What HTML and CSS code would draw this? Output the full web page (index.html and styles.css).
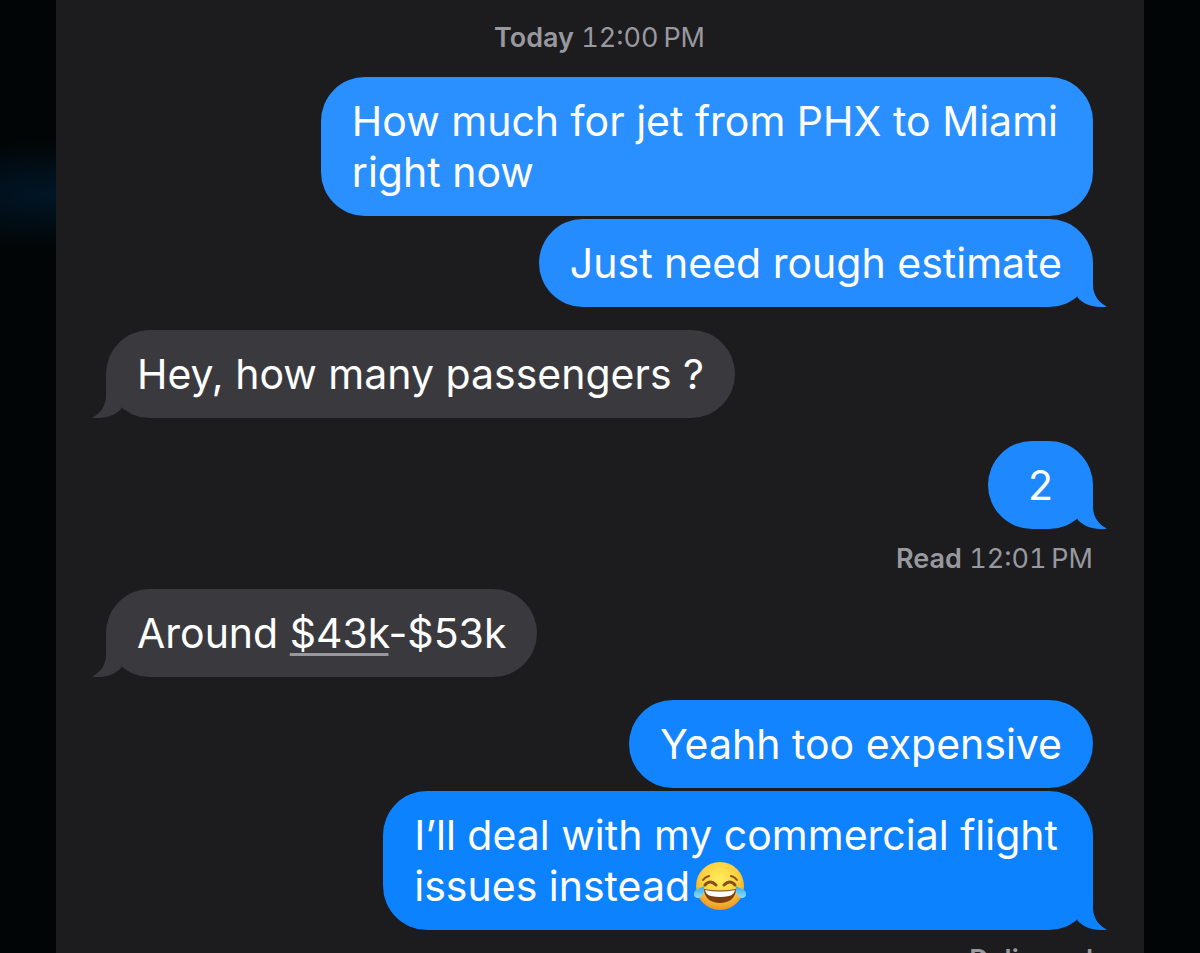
FILE: index.html
```html
<!DOCTYPE html>
<html lang="en">
<head>
<meta charset="utf-8">
<meta name="viewport" content="width=device-width, initial-scale=1">
<title>Messages</title>
<link rel="stylesheet" href="styles.css">
</head>
<body>
<svg class="defs" aria-hidden="true">
  <symbol id="tail" viewBox="0 0 32 44">
    <path d="M2 0H18V22C18 32 24 40 32 43.400C31 44 28 44 25 44C16 44 8 40.500 2.500 34.500Z"/>
  </symbol>
</svg>
<main class="chat">
  <p class="stamp"><b>Today</b> 12:00&#8239;PM</p>

  <div class="group sent">
    <p class="bubble wrapped tone-1">How much for jet from PHX to Miami<br>right now</p>
    <p class="bubble tone-2">Just need rough estimate<svg class="tail" aria-hidden="true"><use href="#tail"/></svg></p>
  </div>

  <div class="group received">
    <p class="bubble">Hey, how many passengers ?<svg class="tail" aria-hidden="true"><use href="#tail"/></svg></p>
  </div>

  <div class="group sent">
    <p class="bubble short tone-3">2<svg class="tail" aria-hidden="true"><use href="#tail"/></svg></p>
    <p class="receipt"><b>Read</b> 12:01&#8239;PM</p>
  </div>

  <div class="group received">
    <p class="bubble">Around <a class="amount" href="#amount">$43k</a>-$53k<svg class="tail" aria-hidden="true"><use href="#tail"/></svg></p>
  </div>

  <div class="group sent">
    <p class="bubble tone-4">Yeahh too expensive</p>
    <p class="bubble wrapped tone-5">I’ll deal with my commercial flight<br>issues instead<svg class="emoji" viewBox="0 0 54 50" role="img" aria-label="Face with tears of joy">
      <defs>
        <radialGradient id="skin" cx=".5" cy=".35" r=".65">
          <stop offset="0" stop-color="#ffec5e"/><stop offset=".6" stop-color="#fdcf3c"/><stop offset="1" stop-color="#ee9320"/>
        </radialGradient>
        <linearGradient id="tear" x1="0" y1="0" x2="0" y2="1">
          <stop offset="0" stop-color="#35a9ee"/><stop offset="1" stop-color="#8be0ff"/>
        </linearGradient>
      </defs>
      <circle cx="27" cy="25" r="24" fill="url(#skin)"/>
      <g fill="none" stroke="#84501a" stroke-linecap="round">
        <path stroke-width="2" d="M10 19Q12 16 16 15M38 15Q42 16 44 19"/>
        <path stroke-width="3" d="M12 24Q17 18 23 24M31 24Q37 18 42 24"/>
      </g>
      <path fill="#7b3f12" d="M11 28Q27 31 43 28C43 37 36 42 27 42S11 37 11 28Z"/>
      <path fill="#fff" d="M12 29Q27 32 42 29Q41 34 36 35Q27 37 18 35Q13 34 12 29Z"/>
      <path fill="url(#tear)" d="M11 25C12 31 9 37 5 37C0 37 0 31 3 29C6 27 8 27 11 25ZM43 25C42 31 45 37 49 37C54 37 54 31 51 29C48 27 46 27 43 25Z"/>
    </svg><svg class="tail" aria-hidden="true"><use href="#tail"/></svg></p>
    <p class="receipt"><b>Delivered</b></p>
  </div>
</main>
</body>
</html>
```
FILE: styles.css
```css
* { box-sizing: border-box; }

body {
  margin: 0;
  height: 100vh;
  overflow: hidden;
  display: flex;
  justify-content: center;
  padding: 0 56px;
  background:
    radial-gradient(ellipse 180px 54px at 54px 194px, #001627, transparent),
    #020506;
  font-family: Inter, "Liberation Sans", sans-serif;
}

p { margin: 0; }

.defs { position: absolute; width: 0; height: 0; }

.chat {
  flex: 1;
  display: flex;
  flex-direction: column;
  gap: 23px;
  padding: 22px 51px 0 50px;
  background: #1c1c1e;
  color: #fff;
}

.stamp, .receipt {
  color: #98989f;
  font-size: 27px;
  line-height: 32px;
  font-variant-numeric: tabular-nums;
}

.stamp { text-align: center; }
.stamp b, .receipt b { font-weight: 600; }

.group {
  display: flex;
  flex-direction: column;
  gap: 3px;
}

.sent { align-items: flex-end; }
.received { align-items: flex-start; }

.bubble {
  --fill: #3a3a3e;
  position: relative;
  padding: 19px 31px 18px;
  border-radius: 44px;
  background: var(--fill);
  font-size: 41px;
  line-height: 51px;
}

.short { padding-inline: 40px; }
.wrapped { padding-right: 35px; }

.tone-1 { --fill: #2a90ff; }
.tone-2 { --fill: #248cff; }
.tone-3 { --fill: #1e89ff; }
.tone-4 { --fill: #1284ff; }
.tone-5 { --fill: #0d82ff; }

.tail {
  position: absolute;
  right: -14px;
  bottom: 0;
  width: 32px;
  height: 44px;
  fill: var(--fill);
}

.received .tail {
  right: auto;
  left: -14px;
  transform: scaleX(-1);
}

.receipt { padding: 11px 0 0; }
.group:has(.receipt) { margin-bottom: -9px; }

.amount {
  color: inherit;
  text-decoration: underline 3px #98989c;
  text-underline-offset: 5px;
  text-decoration-skip-ink: none;
}

.emoji {
  width: 54px;
  height: 50px;
  margin: -2px 0 -2px 3px;
  vertical-align: -8px;
}
```
